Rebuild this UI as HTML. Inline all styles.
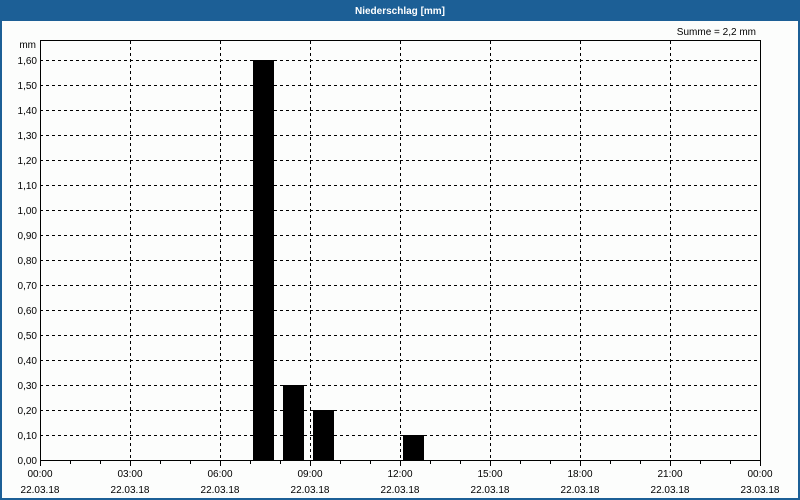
<!DOCTYPE html>
<html><head><meta charset="utf-8"><style>
html,body{margin:0;padding:0;background:#fff}
svg{display:block}
text{font-family:"Liberation Sans",sans-serif;font-size:10px;fill:#000}
</style></head><body>
<svg width="800" height="500" xmlns="http://www.w3.org/2000/svg">
<rect x="0" y="0" width="800" height="500" fill="#1c5f96"/>
<rect x="2" y="21" width="796" height="477" fill="#fcfdfc"/>
<text x="400" y="14" text-anchor="middle" style="fill:#fff;font-weight:bold;font-size:10px">Niederschlag [mm]</text>
<text x="756" y="35" text-anchor="end">Summe = 2,2 mm</text>
<text x="36" y="48" text-anchor="end">mm</text>
<g stroke="#000" stroke-width="1" stroke-dasharray="3,3" fill="none">
<path d="M40 60.5H758M40 85.5H758M40 110.5H758M40 135.5H758M40 160.5H758M40 185.5H758M40 210.5H758M40 235.5H758M40 260.5H758M40 285.5H758M40 310.5H758M40 335.5H758M40 360.5H758M40 385.5H758M40 410.5H758M40 435.5H758"/>
<path d="M130.5 41V460M220.5 41V460M310.5 41V460M400.5 41V460M490.5 41V460M580.5 41V460M670.5 41V460"/>
</g>
<g fill="#000">
<rect x="253" y="60" width="21" height="400"/>
<rect x="283" y="385" width="21" height="75"/>
<rect x="313" y="410" width="21" height="50"/>
<rect x="403" y="435" width="21" height="25"/>
</g>
<rect x="40.5" y="40.5" width="720" height="420" fill="none" stroke="#000"/>
<g stroke="#000">
<path d="M40.5 460V466M70.5 460V464M100.5 460V464M130.5 460V466M160.5 460V464M190.5 460V464M220.5 460V466M250.5 460V464M280.5 460V464M310.5 460V466M340.5 460V464M370.5 460V464M400.5 460V466M430.5 460V464M460.5 460V464M490.5 460V466M520.5 460V464M550.5 460V464M580.5 460V466M610.5 460V464M640.5 460V464M670.5 460V466M700.5 460V464M730.5 460V464M760.5 460V466"/>
</g>
<g text-anchor="end">
<text x="37" y="64">1,60</text><text x="37" y="89">1,50</text><text x="37" y="114">1,40</text><text x="37" y="139">1,30</text><text x="37" y="164">1,20</text><text x="37" y="189">1,10</text><text x="37" y="214">1,00</text><text x="37" y="239">0,90</text><text x="37" y="264">0,80</text><text x="37" y="289">0,70</text><text x="37" y="314">0,60</text><text x="37" y="339">0,50</text><text x="37" y="364">0,40</text><text x="37" y="389">0,30</text><text x="37" y="414">0,20</text><text x="37" y="439">0,10</text><text x="37" y="464">0,00</text>
</g>
<g text-anchor="middle">
<text x="40" y="477">00:00</text><text x="40" y="493">22.03.18</text>
<text x="130" y="477">03:00</text><text x="130" y="493">22.03.18</text>
<text x="220" y="477">06:00</text><text x="220" y="493">22.03.18</text>
<text x="310" y="477">09:00</text><text x="310" y="493">22.03.18</text>
<text x="400" y="477">12:00</text><text x="400" y="493">22.03.18</text>
<text x="490" y="477">15:00</text><text x="490" y="493">22.03.18</text>
<text x="580" y="477">18:00</text><text x="580" y="493">22.03.18</text>
<text x="670" y="477">21:00</text><text x="670" y="493">22.03.18</text>
<text x="760" y="477">00:00</text><text x="760" y="493">23.03.18</text>
</g>
</svg>
</body></html>
